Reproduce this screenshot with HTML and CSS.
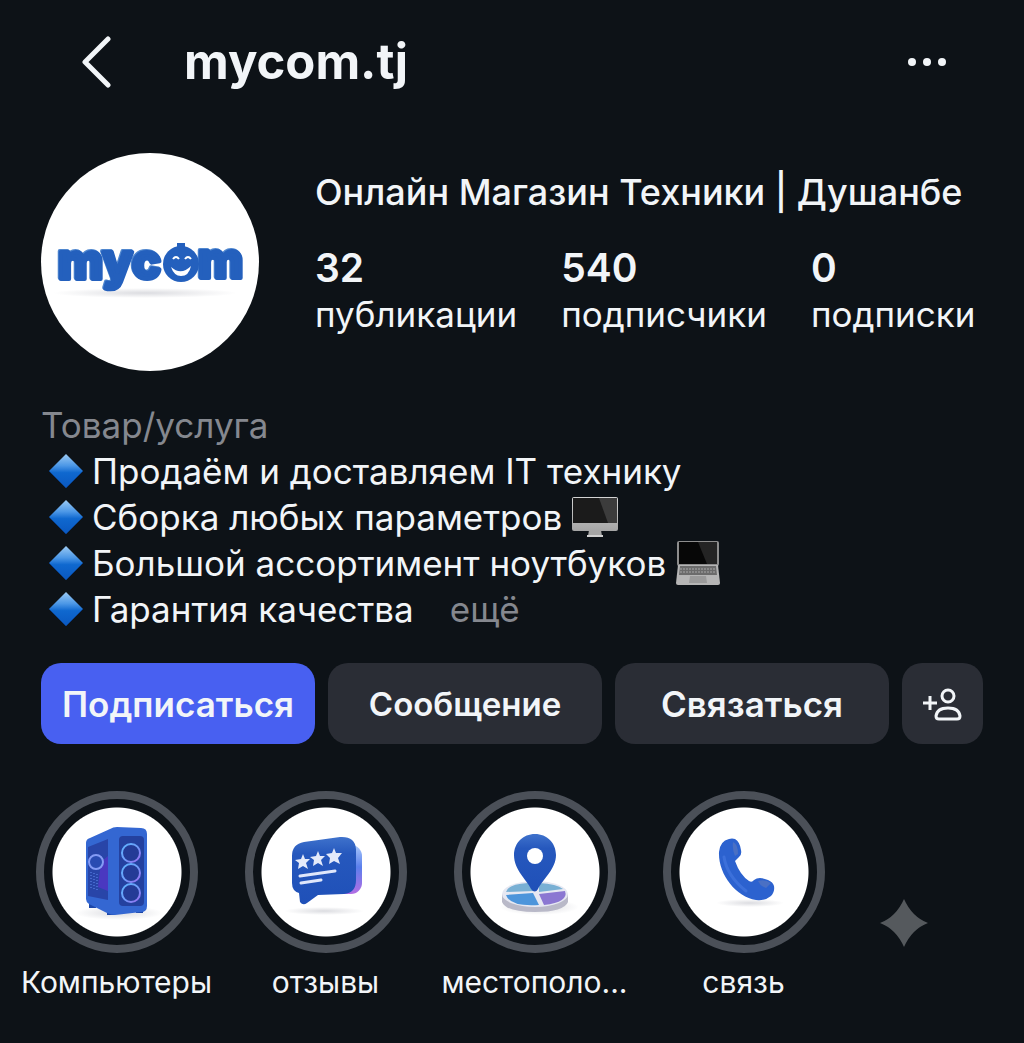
FILE: index.html
```html
<!DOCTYPE html>
<html lang="ru">
<head>
<meta charset="utf-8">
<meta name="viewport" content="width=device-width, initial-scale=1">
<title>mycom.tj</title>
<link rel="stylesheet" href="styles.css">
</head>
<body>
<svg class="defs" width="0" height="0" aria-hidden="true">
  <defs>
    <linearGradient id="gem" x1="0" y1="0" x2="0" y2="1"><stop offset="0" stop-color="#9ccbf4"/><stop offset=".35" stop-color="#4a96e6"/><stop offset=".55" stop-color="#0f68cf"/><stop offset="1" stop-color="#0a58c0"/></linearGradient>
    <linearGradient id="blue" x1="0" y1="0" x2="0" y2="1"><stop offset="0" stop-color="#3f72cc"/><stop offset=".25" stop-color="#2658bd"/><stop offset="1" stop-color="#1f50b8"/></linearGradient>
    <linearGradient id="ring" x1="0" y1="0" x2="1" y2="1"><stop offset="0" stop-color="#5cb4ff"/><stop offset=".5" stop-color="#6e9cf8"/><stop offset="1" stop-color="#9a6cf0"/></linearGradient>
    <linearGradient id="back" x1="0" y1="0" x2="0" y2="1"><stop offset="0" stop-color="#a8c8fa"/><stop offset=".45" stop-color="#5a7fec"/><stop offset="1" stop-color="#b46ee4"/></linearGradient>
    <linearGradient id="metal" x1="0" y1="0" x2="0" y2="1"><stop offset="0" stop-color="#d4d4d4"/><stop offset="1" stop-color="#a5a5a5"/></linearGradient>
    <radialGradient id="shade"><stop offset="0" stop-color="#9a9ca8" stop-opacity=".35"/><stop offset="1" stop-color="#9a9ca8" stop-opacity="0"/></radialGradient>
    <symbol id="diamond" viewBox="0 0 34 34"><path d="M17 0 34 17 17 34 0 17Z" fill="url(#gem)"/><path d="M0 17 17 34 34 17" fill="none" stroke="#0a3f88" stroke-width="1"/></symbol>
  </defs>
</svg>
<main class="profile">
  <header class="topbar">
    <button class="icon-button" type="button" aria-label="Назад">
      <svg width="30" height="52" viewBox="0 0 30 52" fill="none" stroke="#f2f5f8" stroke-width="5" stroke-linecap="round" stroke-linejoin="round"><path d="M27 3 4 26 27 49"/></svg>
    </button>
    <h1 class="username">mycom.tj</h1>
    <button class="icon-button more" type="button" aria-label="Ещё действия">
      <svg width="40" height="12" viewBox="0 0 40 12" fill="#f2f5f8"><circle cx="5" cy="6" r="4"/><circle cx="20" cy="6" r="4"/><circle cx="35" cy="6" r="4"/></svg>
    </button>
  </header>

  <section class="summary">
    <svg class="avatar" viewBox="0 0 218 218" role="img" aria-label="mycom">
      <circle cx="109" cy="109" r="109" fill="#fff"/>
      <ellipse cx="104" cy="140" rx="92" ry="5" fill="url(#shade)"/>
      <g class="logo-depth"><text x="16" y="125">myc</text><text x="156" y="124">m</text></g>
      <g class="logo-face"><text x="17" y="126">myc</text><text x="157" y="125">m</text></g>
      <circle cx="140" cy="111" r="18" fill="#2460bd"/>
      <path d="M136 90h8v8h-8z" fill="#2460bd"/>
      <path d="M132 106q3-4 6 0M144 106q3-4 6 0" fill="none" stroke="#fff" stroke-width="2"/>
      <path d="M130 114q10 9 20-1-2 10-10 10-7 0-10-9Z" fill="#fff"/>
    </svg>
    <div class="facts">
      <h2 class="name">Онлайн Магазин Техники | Душанбе</h2>
      <dl class="stats">
        <div class="stat"><dt>публикации</dt><dd>32</dd></div>
        <div class="stat"><dt>подписчики</dt><dd>540</dd></div>
        <div class="stat"><dt>подписки</dt><dd>0</dd></div>
      </dl>
    </div>
  </section>

  <section class="bio">
    <p class="category">Товар/услуга</p>
    <ul class="offers">
      <li><svg class="gem"><use href="#diamond"/></svg>Продаём и доставляем IT технику</li>
      <li><svg class="gem"><use href="#diamond"/></svg>Сборка любых параметров
        <svg class="device" width="46" height="42" viewBox="0 0 46 42"><path d="M17 34h12l1 6H16Z" fill="#a5a5a5"/><path d="M15 39h16v2H15Z" fill="#d0d0d0"/><rect y="1" width="46" height="34" rx="2" fill="url(#metal)"/><path d="M1 2h44v25H1Z" fill="#1b1b1b"/><path d="M27 2h18v25h-9Z" fill="#3c3c3c"/></svg></li>
      <li><svg class="gem"><use href="#diamond"/></svg>Большой ассортимент ноутбуков
        <svg class="device" width="44" height="44" viewBox="0 0 44 44"><rect x="1" y="0" width="42" height="25" rx="2" fill="#8d8d8d"/><path d="M3 1h38v22H3Z" fill="#070707"/><path d="M22 1h19v22H31Z" fill="#242424"/><path d="M2 24h40l2 18q0 2-2 2H2q-2 0-2-2Z" fill="#b5b5b5"/><path d="M4 25h36l1 9H3Z" fill="#6b6b6b"/><path d="M4 28h36M4 31h36" stroke="#a8a8a8" stroke-dasharray="2 1"/><path d="M14 35h16l1 7H13Z" fill="#9a9a9a"/></svg></li>
      <li><svg class="gem"><use href="#diamond"/></svg>Гарантия качества <a class="expand" href="#">ещё</a></li>
    </ul>
  </section>

  <div class="actions">
    <button class="action primary" type="button">Подписаться</button>
    <button class="action message" type="button">Сообщение</button>
    <button class="action" type="button">Связаться</button>
    <button class="action square" type="button" aria-label="Похожие аккаунты">
      <svg width="40" height="34" viewBox="0 0 40 34" fill="none" stroke="#f2f5f8" stroke-width="3"><path d="M0 16h14M7 9v14"/><circle cx="25" cy="9" r="6"/><path d="M16 32q-3 0-3-3 1-8 12-8t12 8q0 3-3 3Z" stroke-linejoin="round"/></svg>
    </button>
  </div>

  <nav class="highlights" aria-label="Актуальное">
    <a class="highlight" href="#">
      <svg class="cover" viewBox="0 0 128 128">
        <ellipse cx="66" cy="105" rx="44" ry="7" fill="url(#shade)"/>
        <path d="M36 94v6h7v-6M54 102v5h8v-5M83 100v5h7v-6" fill="#1c47a8"/>
        <path d="M33 35q0-4 4-5l20-9q3-2 7-2l24 1q6 0 6 6v72q0 6-6 6l-26 3q-4 0-8-2L36 96q-3-2-3-5Z" fill="#3467d2"/>
        <path d="M35 39 55 31v61L35 88Z" fill="#2845a8"/><path d="M48 54 55 48v35l-10-4Z" fill="#4a38c0"/>
        <path d="M38 64v16M41 65v17M44 66v16" stroke="#638df0" stroke-dasharray="1 2"/>
        <circle cx="43" cy="54" r="7" fill="#294bb2" stroke="#849bf5" stroke-width="2"/>
        <rect x="66" y="28" width="25" height="70" rx="4" fill="#24419f"/>
        <g fill="#243b96" stroke="url(#ring)" stroke-width="2"><circle cx="78" cy="45" r="9"/><circle cx="78" cy="65" r="9"/><circle cx="78" cy="85" r="9"/></g>
      </svg>
      <span class="label">Компьютеры</span>
    </a>
    <a class="highlight" href="#">
      <svg class="cover" viewBox="0 0 128 128">
        <ellipse cx="62" cy="103" rx="40" ry="4" fill="url(#shade)"/>
        <rect x="50" y="37" width="50" height="49" rx="11" fill="url(#back)"/>
        <path d="M42 34 78 29q15-1 16 12v31q0 13-12 14L56 87 45 95q-4 3-7-1l-1-9q-7-2-7-10V48q0-12 12-14Z" fill="url(#blue)"/>
        <g fill="#e4eafa"><path d="m41 46 2 5 5 0-4 4 2 6-5-3-5 3 1-6-4-3 6-1Z"/><path d="m56 43 2 5 5 0-4 4 2 6-5-3-5 3 1-6-4-3 6-1Z"/><path d="m72 40 2 5 6 0-4 5 2 6-6-3-5 3 1-6-4-4 6-1Z"/></g>
        <path d="m38 68 35-5M39 75l20-3" stroke="#dfe7fb" stroke-width="3" stroke-linecap="round"/>
      </svg>
      <span class="label">отзывы</span>
    </a>
    <a class="highlight" href="#">
      <svg class="cover" viewBox="0 0 128 128">
        <ellipse cx="68" cy="99" rx="40" ry="8" fill="url(#shade)"/>
        <path d="M31 86v8q4 10 33 10t33-10v-8Z" fill="#b9b9c8"/><ellipse cx="64" cy="86" rx="33" ry="13" fill="#e6e8f2"/>
        <path d="M35 84q2-8 22-9l6 8ZM68 75q18 1 24 6l-24 3Z" fill="#79b0d4"/><path d="m35 87 27-2 6 12q-29 2-33-10Z" fill="#4d95db"/><path d="m68 86 26-3q4 11-21 14Z" fill="#8b77d2"/>
        <path d="M64 26c-12 0-21 9-21 21 0 15 13 25 17 34q4 5 7 0c5-10 18-20 18-34 0-12-9-21-21-21Z" fill="url(#blue)"/><circle cx="64" cy="48" r="8" fill="#fff"/>
      </svg>
      <span class="label">местополо...</span>
    </a>
    <a class="highlight" href="#">
      <svg class="cover" viewBox="0 0 128 128">
        <ellipse cx="70" cy="95" rx="34" ry="4" fill="url(#shade)"/>
        <path d="M49 31q-9 2-10 13c-1 22 17 45 37 48q9 1 15-4 4-4 3-10-1-4-6-6-9-4-14 0-2 3-5 1-9-6-14-20l4-4q3-2 2-7-1-8-6-11-3-1-6 0Z" fill="#2c62cf"/>
        <path d="M53 34q5 2 5 12l-3 2q-3-7-2-14ZM78 73q7-2 13 2l-5 5q-6-2-8-7Z" fill="#4a70c4"/>
        <path d="M44 49q3 19 22 34" stroke="#3c70da" stroke-width="3" fill="none" stroke-linecap="round"/>
      </svg>
      <span class="label">связь</span>
    </a>
    <svg class="sparkle" width="48" height="48" viewBox="0 0 48 48" aria-hidden="true"><path d="M24 0Q32 18 48 24 32 30 24 48 16 30 0 24 16 18 24 0Z" fill="#55595d"/></svg>
  </nav>
</main>
</body>
</html>
```

FILE: styles.css
```css
* { box-sizing: border-box; }

body {
  margin: 0;
  min-height: 100vh;
  background: #0d1217;
  color: #f2f5f8;
  font-family: Inter, "Noto Sans", sans-serif;
}

h1, h2, p, dl, dd, ul { margin: 0; padding: 0; }
.defs { position: absolute; }
a { color: inherit; text-decoration: none; }
button { margin: 0; padding: 0; border: 0; font: inherit; color: inherit; cursor: pointer; }

.profile { padding: 24px 41px; }

.topbar { display: flex; align-items: center; height: 76px; padding: 0 36px 0 40px; }
.icon-button { display: flex; background: none; }
.username { margin-left: 73px; font-size: 49px; line-height: 76px; font-weight: 700; }
.more { margin-left: auto; }

.summary { display: flex; gap: 56px; margin-top: 53px; }
.avatar { flex: none; width: 218px; height: 218px; }
.logo-depth, .logo-face { font-size: 49px; font-weight: 800; stroke-width: 4px; stroke-linejoin: round; }
.logo-depth { fill: #5087cf; stroke: #5087cf; }
.logo-face { fill: #2460bd; stroke: #2460bd; }

.facts { flex: 1; padding-top: 16px; }
.name { font-size: 36px; line-height: 46px; font-weight: 500; white-space: nowrap; }
.stats { display: flex; gap: 44px; margin-top: 30px; }
.stat { display: flex; flex-direction: column-reverse; }
.stat dt { font-size: 35px; line-height: 46px; }
.stat dd { font-size: 39px; line-height: 46px; font-weight: 600; }

.bio { margin-top: 31px; font-size: 35px; line-height: 46px; }
.category { color: #85888f; }
.offers { list-style: none; }
.offers li { display: flex; align-items: center; height: 46px; }
.gem { flex: none; width: 34px; height: 34px; margin: 0 9px 0 8px; }
.device { flex: none; margin-left: 10px; }
.expand { margin-left: 36px; color: #85888f; }

.actions { display: flex; gap: 13px; margin-top: 31px; }
.action {
  flex: 1;
  display: flex;
  align-items: center;
  justify-content: center;
  height: 81px;
  border-radius: 20px;
  background: #2a2d35;
  font-size: 35px;
  font-weight: 600;
}
.primary { background: #4860f1; }
.message { font-size: 33px; }
.square { flex: 0 0 81px; }

.highlights { display: flex; margin: 47px 0 0 -29px; }
.highlight { flex: 0 0 209px; display: flex; flex-direction: column; align-items: center; }
.cover {
  width: 162px;
  height: 162px;
  padding: 9px;
  border: 8px solid #4b5058;
  border-radius: 50%;
  background: radial-gradient(circle, #fff 64px, transparent 65px);
}
.label { margin-top: 10px; font-size: 30px; line-height: 38px; white-space: nowrap; }
.sparkle { flex: none; margin: 108px 0 0 32px; }
```
